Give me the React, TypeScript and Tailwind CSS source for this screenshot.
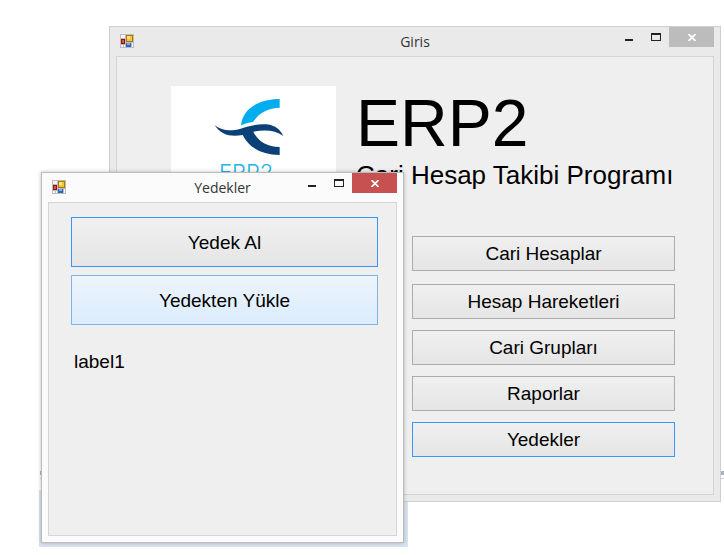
import type { ReactNode } from "react";

function AppIcon() {
  return (
    <svg width="14" height="14" viewBox="0 0 14 14" shapeRendering="crispEdges" aria-hidden="true">
      <rect width="14" height="14" fill="#bdbdbd" />
      <rect x="1" y="1" width="4" height="3" fill="#f4f4f4" />
      <rect x="1" y="11" width="2" height="2" fill="#f4f4f4" />
      <rect x="4" y="11" width="1" height="2" fill="#f4f4f4" />
      <rect x="12" y="9" width="1" height="4" fill="#f4f4f4" />
      <rect x="1" y="5" width="4" height="5" fill="#8e1410" />
      <rect x="2" y="6" width="2" height="3" fill="#d8584a" />
      <rect x="6" y="1" width="7" height="7" fill="#a87800" />
      <rect x="7" y="2" width="5" height="5" fill="#f5c531" />
      <rect x="7" y="2" width="3" height="3" fill="#fde58a" />
      <rect x="6" y="9" width="5" height="4" fill="#2f62c8" />
      <rect x="7" y="9" width="3" height="2" fill="#7fa8f0" />
    </svg>
  );
}

function Logo() {
  return (
    <div className="flex h-[140px] w-[165px] shrink-0 flex-col bg-white">
      <svg className="w-full" viewBox="0 0 495 222" aria-hidden="true">
        <path d="M326 39 V65 C292 66 264 80 246 108 C233 110 221 113 210 118 C214 72 258 39 326 39Z" fill="#00aeef" />
        <path
          d="M131 118 C154 136 181 135 209 128 C244 118 261 113 287 115 C314 118 328 132 337 150 C312 132 283 130 247 137 C260 166 288 182 326 183 V207 C270 206 233 184 215 147 C180 154 150 147 131 118Z"
          fill="#0c4178"
        />
      </svg>
      <span className="pl-12 font-['Inter',sans-serif] text-[22px] leading-6 font-light text-[#22b2ea]">ERP2</span>
    </div>
  );
}

type WindowProps = { title: string; active?: boolean; className: string; children: ReactNode };

function Window({ title, active = false, className, children }: WindowProps) {
  return (
    <section
      aria-label={title}
      className={
        "absolute border px-[6px] pb-[6px] " +
        (active
          ? "border-[#bcbcbc] bg-[#fbfbfb] shadow-[0_0_4px_rgba(0,0,0,0.25)] "
          : "border-[#cfcfcf] bg-[#eaeaea] ") +
        className
      }
    >
      <header className="grid h-[29px] grid-cols-[1fr_auto_1fr] items-start">
        <div className="pt-[7px] pl-1">
          <AppIcon />
        </div>
        <h2 className="pt-[5px] font-['Open_Sans','Noto_Sans',sans-serif] text-[14px] leading-5 text-[#333]">{title}</h2>
        <div className="flex justify-end">
          <button aria-label="Simge durumuna küçült" className="flex h-5 w-[27px] items-end justify-center pb-[6px]">
            <span className="h-[2px] w-2 bg-[#222]" />
          </button>
          <button aria-label="Ekranı kapla" className="flex h-5 w-[27px] items-end justify-center pb-[6px]">
            <span className="h-2 w-[10px] border border-t-2 border-[#222]" />
          </button>
          <button
            aria-label="Kapat"
            className={"flex h-5 w-[45px] items-center justify-center " + (active ? "bg-[#c75050]" : "bg-[#bcbcbc]")}
          >
            <svg width="8" height="7" viewBox="0 0 8 7" aria-hidden="true">
              <path d="M0.5 0 L7.5 7 M7.5 0 L0.5 7" stroke="#fff" strokeWidth="1.7" />
            </svg>
          </button>
        </div>
      </header>
      <div className="border border-[#d5d5d5] bg-[#efefef]">{children}</div>
    </section>
  );
}

const face = "block w-full border bg-linear-to-b text-[19px] leading-6 ";
const plain = "from-[#f0f0f0] to-[#e5e5e5] ";

function MenuButton({ label, focused = false }: { label: string; focused?: boolean }) {
  return (
    <button className={face + plain + "h-[35px] " + (focused ? "border-[#3399ff]" : "border-[#acacac]")}>{label}</button>
  );
}

export default function App() {
  return (
    <main className="relative min-h-screen w-full overflow-hidden bg-white font-['Liberation_Sans',Arial,sans-serif] text-black">
      <div className="absolute top-[471px] right-0 left-10 h-[8px] border-t-4 border-b border-t-[#aab4c6] border-b-[#cdd6e6]" />
      <div className="absolute top-[490px] left-[39px] h-[57px] w-[369px] bg-[#dae4f0]" />

      <Window title="Giris" className="top-[26px] right-[3px] left-[109px]">
        <div className="flex gap-5 pt-[29px] pl-[54px]">
          <Logo />
          <div className="whitespace-nowrap">
            <h1 className="text-[66px] leading-[74px]">ERP2</h1>
            <p className="text-[26px] leading-[30px]">Cari Hesap Takibi Programı</p>
          </div>
        </div>
        <nav className="mt-[10px] mr-[38px] mb-[37px] ml-auto flex w-[263px] flex-col gap-[11px]">
          <div className="pb-[2px]">
            <MenuButton label="Cari Hesaplar" />
          </div>
          <MenuButton label="Hesap Hareketleri" />
          <MenuButton label="Cari Grupları" />
          <MenuButton label="Raporlar" />
          <MenuButton label="Yedekler" focused />
        </nav>
      </Window>

      <Window title="Yedekler" active className="top-[172px] left-[41px] w-[363px]">
        <div className="flex flex-col gap-2 pt-[14px] pr-[18px] pb-[161px] pl-[22px]">
          <button className={face + plain + "h-[50px] border-[#3399ff] pt-[2px]"}>Yedek Al</button>
          <button className={face + "h-[50px] border-[#7eb4ea] from-[#ecf4fc] to-[#dcecfc] pt-[2px]"}>
            Yedekten Yükle
          </button>
          <p className="mt-[17px] pl-[3px] text-[19px] leading-6">label1</p>
        </div>
      </Window>
    </main>
  );
}
